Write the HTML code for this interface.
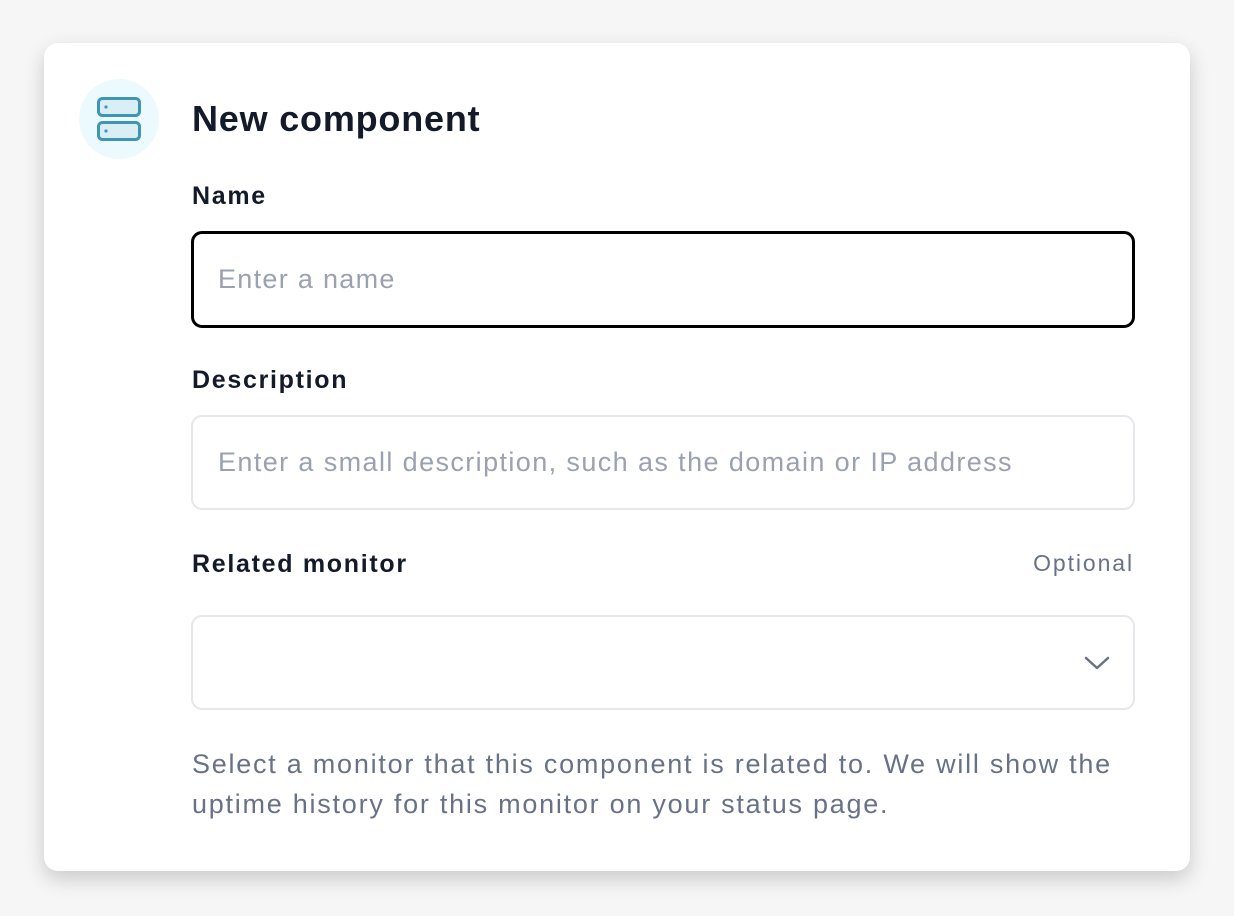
<!DOCTYPE html>
<html><head><style>
body{margin:0;width:1234px;height:916px;background:#f6f6f6;font-family:"Liberation Sans",sans-serif;position:relative;overflow:hidden}
.card{position:absolute;left:44px;top:43px;width:1146px;height:828px;background:#fff;border-radius:14px;box-shadow:0 8px 20px rgba(0,0,0,.18)}
.ic{position:absolute;left:79px;top:79px;width:80px;height:80px;border-radius:50%;background:#ecf9fd}
.t{position:absolute;left:192px;color:#131a2a}
.title{top:98px;font-size:36px;font-weight:bold;letter-spacing:0.8px}
.lab{font-size:25px;font-weight:bold;letter-spacing:1.7px}
.inp{position:absolute;left:191px;width:944px;height:95px;border:2px solid #e6e7ea;border-radius:11px;box-sizing:border-box;font-size:27px;color:#9aa1b1;padding-left:25px;line-height:91px;letter-spacing:1.4px;white-space:nowrap}
.help{position:absolute;left:192px;top:744px;width:940px;font-size:27px;line-height:40px;color:#687287;letter-spacing:1.75px}
</style></head><body>
<div class="card"></div>
<div class="ic"></div>
<svg style="position:absolute;left:96px;top:96px" width="46" height="46" viewBox="0 0 46 46">
<rect x="2.5" y="2.5" width="41" height="17" rx="4" fill="#d9eef5" stroke="#3f96b4" stroke-width="3"/>
<rect x="2.5" y="26.5" width="41" height="17" rx="4" fill="#d9eef5" stroke="#3f96b4" stroke-width="3"/>
<circle cx="10" cy="11" r="1.6" fill="#3f96b4"/><circle cx="10" cy="35" r="1.6" fill="#3f96b4"/>
</svg>
<div class="t title">New component</div>
<div class="t lab" style="top:182px">Name</div>
<div class="inp" style="top:231px;height:97px;border:3px solid #000;line-height:91px;padding-left:24px;letter-spacing:1.3px">Enter a name</div>
<div class="t lab" style="top:366px">Description</div>
<div class="inp" style="top:415px">Enter a small description, such as the domain or IP address</div>
<div class="t lab" style="top:550px">Related monitor</div>
<div style="position:absolute;right:100px;top:550px;font-size:23px;color:#687287;letter-spacing:1.9px">Optional</div>
<div class="inp" style="top:615px"></div>
<svg style="position:absolute;left:1084px;top:655px" width="26" height="16" viewBox="0 0 26 16"><path d="M2 3l11 10 11-10" fill="none" stroke="#687287" stroke-width="2.5" stroke-linecap="round" stroke-linejoin="round"/></svg>
<div class="help">Select a monitor that this component is related to. We will show the uptime history for this monitor on your status page.</div>
</body></html>
